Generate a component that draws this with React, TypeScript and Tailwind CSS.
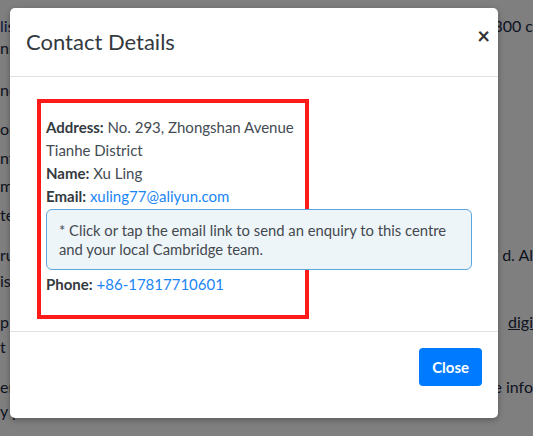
import React from "react";

const bgLines: { top: number; left: string; right?: string; rightLink?: boolean; leftLink?: boolean }[] = [
  { top: 15, left: "lish", right: "300 c", leftLink: true },
  { top: 37, left: "nst" },
  { top: 79, left: "nd" },
  { top: 118, left: "ou" },
  { top: 147, left: "nt" },
  { top: 175, left: "ms" },
  { top: 204, left: "te" },
  { top: 244, left: "ru", right: "d. Al" },
  { top: 270, left: "is" },
  { top: 311, left: "p", right: "digi", rightLink: true },
  { top: 336, left: "t a" },
  { top: 376, left: "er", right: "e info" },
  { top: 400, left: "y p" },
];

function BackgroundPage() {
  return (
    <div className="relative h-[436px] w-[533px] overflow-hidden bg-white text-[16px] text-[#222a44]">
      {bgLines.map((line) => (
        <div
          key={line.top}
          style={{ top: line.top }}
          className="absolute left-0 right-0 flex justify-between leading-[22px]"
        >
          <span className={line.leftLink ? "text-[#1b2f7a]" : ""}>{line.left}</span>
          {line.right ? (
            <span className={line.rightLink ? "underline" : ""}>{line.right}</span>
          ) : null}
        </div>
      ))}
    </div>
  );
}

export default function App() {
  return (
    <div className="relative h-[436px] w-[533px] overflow-hidden font-['Lato','Liberation_Sans',sans-serif]">
      <BackgroundPage />
      <div className="absolute inset-0 bg-black/50" />

      <div className="absolute left-[10px] top-[8px] flex h-[410px] w-[488px] flex-col rounded-[5px] bg-white shadow-[0_2px_6px_rgba(0,0,0,0.3)]">
        <div className="flex h-[69px] items-start justify-between border-b border-[#dee2e6] pl-4 pr-[8px] pt-[18px]">
          <h5 className="text-[22px] leading-[32px] text-[#333a40]">Contact Details</h5>
          <button
            type="button"
            aria-label="Close"
            className="-mt-[1px] text-[22px] font-bold leading-none text-[#333]"
          >
            ×
          </button>
        </div>

        <div className="flex-1 px-[27px] pt-[22px]">
          <div className="h-[220px] w-[272px] border-[4px] border-[#ff1a1a] px-[5px] pt-[13px]">
            <div className="w-[426px] text-[15px] leading-[23px] text-[#444b52]">
              <p>
                <b className="text-[#333a40]">Address:</b> No. 293, Zhongshan Avenue
              </p>
              <p>Tianhe District</p>
              <p>
                <b className="text-[#333a40]">Name:</b> Xu Ling
              </p>
              <p>
                <b className="text-[#333a40]">Email:</b>{" "}
                <a className="text-[#1a86f5]">xuling77@aliyun.com</a>
              </p>
              <div className="mb-[3px] mt-[1px] rounded-[6px] border border-[#5aa7e0] bg-[#eef5f9] px-[12px] pb-[10px] pt-[11px] text-[14.8px] leading-[19px] text-[#44494f]">
                * Click or tap the email link to send an enquiry to this centre and your local Cambridge team.
              </div>
              <p>
                <b className="text-[#333a40]">Phone:</b>{" "}
                <a className="text-[#1a86f5]">+86-17817710601</a>
              </p>
            </div>
          </div>
        </div>

        <div className="flex h-[87px] items-start justify-end border-t border-[#dee2e6] px-4 pt-4">
          <button
            type="button"
            className="h-[38px] rounded-[4px] bg-[#007bff] px-[13px] text-[15px] font-bold text-white"
          >
            Close
          </button>
        </div>
      </div>
    </div>
  );
}
